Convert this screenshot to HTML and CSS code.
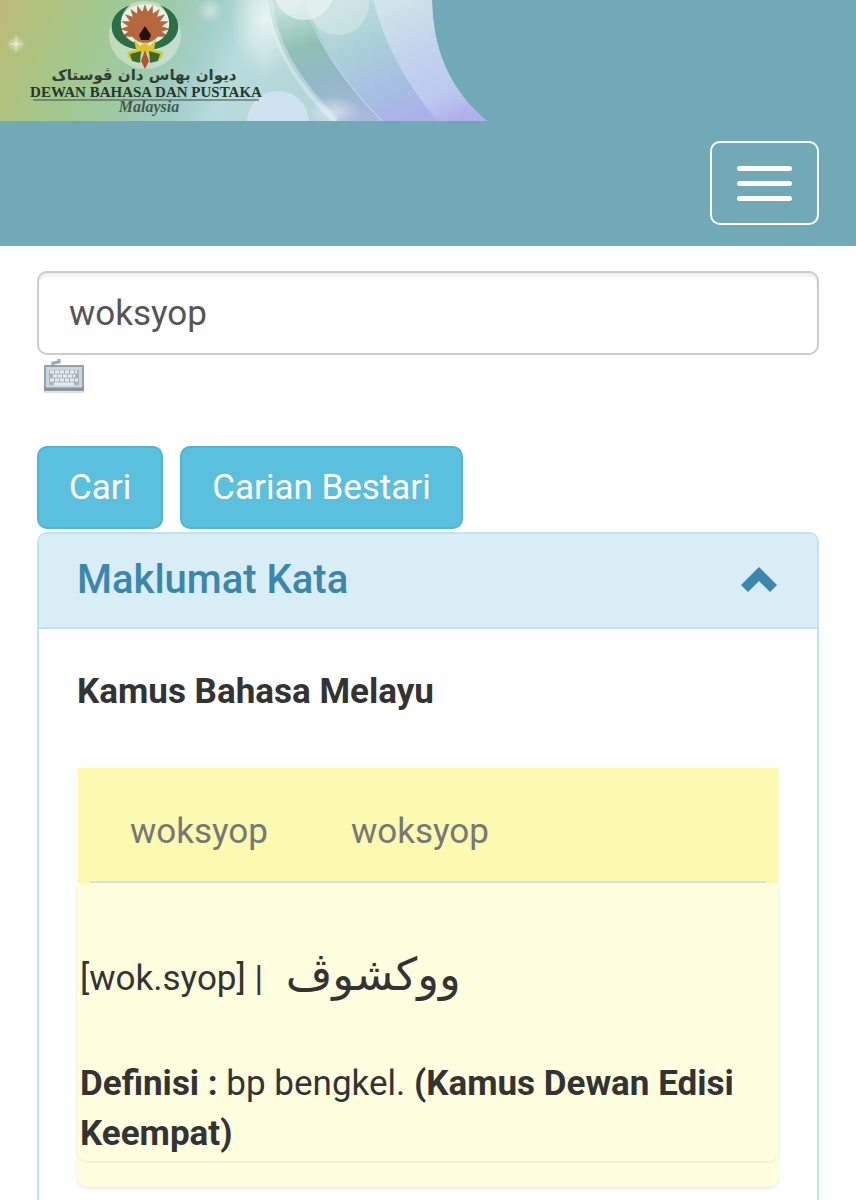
FILE: index.html
```html
<!DOCTYPE html>
<html lang="ms">
<head>
  <meta charset="UTF-8">
  <meta name="viewport" content="width=device-width, initial-scale=1">
  <title>Carian Kamus</title>
  <link rel="stylesheet" href="styles.css">
</head>
<body>

  <!-- Header -->
  <header class="navbar">
    <svg class="banner" viewBox="0 0 488 121" role="img" aria-label="Dewan Bahasa dan Pustaka Malaysia">
      <defs>
        <linearGradient id="sky" x1="0" y1="0" x2="1" y2="0.1">
          <stop offset="0" stop-color="#c0b878"/>
          <stop offset="0.07" stop-color="#b3c07c"/>
          <stop offset="0.2" stop-color="#a3c78c"/>
          <stop offset="0.34" stop-color="#9ecaa8"/>
          <stop offset="0.45" stop-color="#a3cfca"/>
          <stop offset="0.53" stop-color="#b8dcdc"/>
          <stop offset="0.62" stop-color="#b5d8d8"/>
          <stop offset="1" stop-color="#b0cde0"/>
        </linearGradient>
        <linearGradient id="band1" gradientUnits="userSpaceOnUse" x1="300" y1="0" x2="345" y2="121">
          <stop offset="0" stop-color="#c4e2de"/>
          <stop offset="0.35" stop-color="#8fc0b4"/>
          <stop offset="0.65" stop-color="#92b8c8"/>
          <stop offset="1" stop-color="#a9b8dc"/>
        </linearGradient>
        <linearGradient id="band2" gradientUnits="userSpaceOnUse" x1="340" y1="0" x2="400" y2="121">
          <stop offset="0" stop-color="#bfdedb"/>
          <stop offset="0.4" stop-color="#aacfd9"/>
          <stop offset="0.7" stop-color="#a5c0e2"/>
          <stop offset="1" stop-color="#acb2e8"/>
        </linearGradient>
        <linearGradient id="band3" gradientUnits="userSpaceOnUse" x1="400" y1="0" x2="450" y2="121">
          <stop offset="0" stop-color="#cfe4ea"/>
          <stop offset="0.4" stop-color="#c3d4ec"/>
          <stop offset="0.8" stop-color="#bcc8f0"/>
          <stop offset="1" stop-color="#b2b0ea"/>
        </linearGradient>
        <radialGradient id="glow">
          <stop offset="0" stop-color="#fff" stop-opacity="0.7"/>
          <stop offset="1" stop-color="#fff" stop-opacity="0"/>
        </radialGradient>
        <clipPath id="edge">
          <path d="M0 0H432C433 52 451 91 487 121H0Z"/>
        </clipPath>
        <path id="petal" d="M145 34L141 16L145 4L149 16Z"/>
      </defs>
      <g clip-path="url(#edge)">
        <rect width="488" height="121" fill="url(#sky)"/>
        <ellipse cx="265" cy="18" rx="34" ry="60" fill="url(#glow)"/>
        <circle cx="210" cy="11" r="13" fill="url(#glow)" opacity="0.6"/>
        <path d="M268 0H306C320 48 346 84 382 121H338C300 86 274 46 268 0Z" fill="url(#band1)"/>
        <path d="M306 0H373C386 48 408 86 438 121H382C346 84 320 48 306 0Z" fill="url(#band2)"/>
        <path d="M373 0H434C435 52 452 91 488 121H438C408 86 386 48 373 0Z" fill="url(#band3)"/>
        <path d="M269 0C273 46 300 86 336 121" fill="none" stroke="#e8f4f5" stroke-width="7" opacity="0.4"/>
        <ellipse cx="334" cy="112" rx="26" ry="16" fill="url(#glow)" opacity="0.7"/>
        <path d="M307 10C320 48 346 84 382 121" fill="none" stroke="#c6dcea" stroke-width="1"/>
        <circle cx="304" cy="-10" r="30" fill="#fff" opacity="0.5"/>
        <circle cx="338" cy="4" r="31" fill="#e6f2ef" opacity="0.4"/>
        <circle cx="278" cy="122" r="31" fill="#cfe3f0" opacity="0.9"/>
        <circle cx="16" cy="44" r="9" fill="url(#glow)" opacity="0.7"/>
        <path d="M16 32L17 43L26 44L17 45L16 56L15 45L6 44L15 43Z" fill="#fff" opacity="0.4"/>
      </g>
      <!-- crest -->
      <ellipse cx="145" cy="35" rx="36" ry="34" fill="#fff" opacity="0.35"/>
      <ellipse cx="145" cy="28" rx="27" ry="24" fill="#fff" opacity="0.6"/>
      <g fill="#b5683c">
        <use href="#petal"/>
        <use href="#petal" transform="rotate(18 145 29)"/>
        <use href="#petal" transform="rotate(36 145 29)"/>
        <use href="#petal" transform="rotate(54 145 29)"/>
        <use href="#petal" transform="rotate(72 145 29)"/>
        <use href="#petal" transform="rotate(90 145 29)"/>
        <use href="#petal" transform="rotate(108 145 29)"/>
        <use href="#petal" transform="rotate(-18 145 29)"/>
        <use href="#petal" transform="rotate(-36 145 29)"/>
        <use href="#petal" transform="rotate(-54 145 29)"/>
        <use href="#petal" transform="rotate(-72 145 29)"/>
        <use href="#petal" transform="rotate(-90 145 29)"/>
        <use href="#petal" transform="rotate(-108 145 29)"/>
        <circle cx="145" cy="27" r="16"/>
      </g>
      <path d="M130 5C104 14 106 43 134 49C140 50 140 46 136 43C118 37 116 17 130 5Z" fill="#2c6f47"/>
      <path d="M160 5C186 14 184 43 156 49C150 50 150 46 154 43C172 37 174 17 160 5Z" fill="#2c6f47"/>
      <path d="M145 26L151 35L149 40H141L139 35Z" fill="#22130b"/>
      <path d="M134 39L140 46L145 42L150 46L156 39L154 50L163 52L161 59L151 57L145 51L139 57L129 59L127 52L136 50Z" fill="#d9c62c"/>
      <path d="M130 54L141 51L140 63L132 61ZM160 54L149 51L150 63L158 61Z" fill="#3c6b30"/>
      <path d="M145 50L149 61L145 69L141 61Z" fill="#b5532f"/>
      <text class="banner-jawi" x="144" y="80" text-anchor="middle" direction="rtl">ديوان بهاس دان ڤوستاک</text>
      <text class="banner-name" x="146" y="97" text-anchor="middle">DEWAN BAHASA DAN PUSTAKA</text>
      <path d="M33 100H259" stroke="#3d4f49" stroke-width="1"/>
      <text class="banner-country" x="149" y="112" text-anchor="middle">Malaysia</text>
    </svg>
    <div class="navbar-row">
      <button class="navbar-toggle" type="button" aria-label="Menu">
        <span class="icon-bar"></span>
        <span class="icon-bar"></span>
        <span class="icon-bar"></span>
      </button>
    </div>
  </header>

  <main class="container">
    <!-- Search -->
    <form class="search" onsubmit="return false;">
      <input class="form-control" type="text" value="woksyop" aria-label="Carian">
      <button class="keyboard" type="button" aria-label="Papan kekunci">
        <svg viewBox="0 0 42 36" width="42" height="36">
          <path d="M10 8V5L16 4V1" fill="none" stroke="#9aa7b0" stroke-width="3"/>
          <rect x="1" y="33" width="40" height="2" fill="#dfe3e6"/>
          <rect x="2" y="8" width="38" height="24" fill="#cbd6dd" stroke="#94a2ac" stroke-width="2"/>
          <path d="M1 31H41" stroke="#8594a0" stroke-width="3"/>
          <rect x="6" y="12" width="30" height="15" fill="#a9b4bc"/>
          <path d="M7 14H34M10 18H32M7 22H35" stroke="#e6ebef" stroke-width="3" stroke-dasharray="4 1"/>
          <path d="M11 26H31" stroke="#e6ebef" stroke-width="3"/>
        </svg>
      </button>
      <div class="search-buttons">
        <button class="btn" type="submit">Cari</button>
        <button class="btn" type="button">Carian Bestari</button>
      </div>
    </form>

    <!-- Result panel -->
    <section class="panel">
      <div class="panel-heading">
        <h2>Maklumat Kata</h2>
        <button class="collapse" type="button" aria-label="Tutup">
          <svg viewBox="0 0 36 26" width="36" height="26">
            <path d="M18 0L36 18L29 25L18 14L7 25L0 18Z" fill="#3a87ad"/>
          </svg>
        </button>
      </div>
      <div class="panel-body">
        <h3>Kamus Bahasa Melayu</h3>
        <div class="entry">
          <nav class="tabs">
            <a href="#">woksyop</a>
            <a href="#">woksyop</a>
          </nav>
          <div class="entry-body">
            <p class="spelling">[wok.syop] | <span class="jawi" lang="ms-Arab" dir="rtl">ووکشوڤ</span></p>
            <p><b>Definisi :</b> bp bengkel. <b>(Kamus Dewan Edisi Keempat)</b></p>
          </div>
        </div>
      </div>
    </section>
  </main>

</body>
</html>
```
FILE: styles.css
```css
* {
  box-sizing: border-box;
}
body {
  margin: 0;
  background: #fff;
  color: #333;
  font-family: Roboto, sans-serif;
  font-size: 35px;
  line-height: 50px;
}
h2, h3, p {
  margin: 0;
}
button, input {
  font: inherit;
}
button {
  cursor: pointer;
}

/* header */
.navbar {
  background: #72a9b7;
}
.banner {
  display: block;
  width: 488px;
  max-width: 100%;
}
.banner-jawi {
  font: bold 15px "DejaVu Sans", sans-serif;
  fill: #2f3f38;
}
.banner-name {
  font: bold 15px "Liberation Serif", serif;
  fill: #26352f;
}
.banner-country {
  font: italic bold 16px "Liberation Serif", serif;
  fill: #465850;
}
.navbar-row {
  display: flex;
  justify-content: flex-end;
  padding: 20px 37px 21px;
}
.navbar-toggle {
  display: flex;
  flex-direction: column;
  align-items: center;
  justify-content: center;
  gap: 10px;
  width: 109px;
  height: 84px;
  background: none;
  border: 2px solid #fff;
  border-radius: 10px;
}
.icon-bar {
  width: 55px;
  height: 5px;
  border-radius: 3px;
  background: #fff;
}

/* search */
.container {
  padding: 25px 37px 0;
}
.form-control {
  display: block;
  width: 100%;
  height: 84px;
  padding: 0 30px;
  color: #555;
  background: #fff;
  border: 2px solid #ccc;
  border-radius: 10px;
  box-shadow: inset 0 3px 3px rgba(0, 0, 0, 0.07);
}
.keyboard {
  display: block;
  margin: 3px 0 0 6px;
  padding: 0;
  background: none;
  border: 0;
  line-height: 0;
}
.search-buttons {
  display: flex;
  gap: 17px;
  margin-top: 52px;
}
.btn {
  height: 83px;
  padding: 0 30px;
  color: #fff;
  background: #5bc0de;
  border: 2px solid #4fb6d3;
  border-radius: 10px;
}

/* result panel */
.panel {
  margin-top: 3px;
  border: 2px solid #bfe4ea;
  border-radius: 10px;
}
.panel-heading {
  display: flex;
  align-items: center;
  justify-content: space-between;
  padding: 21px 40px 22px 38px;
  background: #d9edf7;
  border-bottom: 2px solid #bfe4ea;
  border-radius: 8px 8px 0 0;
  color: #3a87ad;
}
.panel-heading h2 {
  font-size: 40px;
  font-weight: 500;
}
.collapse {
  display: flex;
  padding: 0;
  background: none;
  border: 0;
}
.panel-body {
  padding: 38px 38px 60px;
}
.panel-body h3 {
  font-size: 35px;
}
.entry {
  margin-top: 51px;
  padding-bottom: 26px;
  background: #ffffdf;
  border-radius: 0 0 10px 10px;
  box-shadow: 0 2px 3px rgba(0, 0, 0, 0.08);
}
.tabs {
  display: flex;
  gap: 83px;
  margin: 0 1px;
  padding: 39px 52px 26px;
  background: #fcf9b0;
}
.tabs a {
  color: #777;
  text-decoration: none;
}
.entry-body {
  padding: 0 3px 2px;
  border-radius: 0 0 10px 10px;
  box-shadow: 0 2px 2px rgba(0, 0, 0, 0.05);
}
.entry-body::before {
  content: "";
  display: block;
  height: 2px;
  margin: -2px 10px 0;
  background: #ddd;
}
.spelling {
  padding: 67px 0 55px;
}
.jawi {
  margin-left: 14px;
  font-family: "DejaVu Sans", sans-serif;
  font-size: 45px;
  line-height: 50px;
}
```
